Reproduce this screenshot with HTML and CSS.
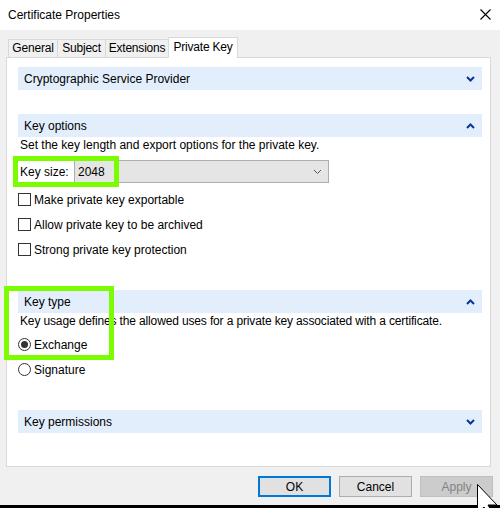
FILE: index.html
```html
<!DOCTYPE html>
<html lang="en">
<head>
  <meta charset="UTF-8">
  <title>Certificate Properties</title>
  <link rel="stylesheet" href="styles.css">
</head>
<body>
  <div class="window">
    <div class="titlebar">
      <span class="title">Certificate Properties</span>
      <svg class="close" width="11" height="11" viewBox="0 0 11 11">
        <path d="M0.5 0.5 L10.5 10.5 M10.5 0.5 L0.5 10.5" stroke="#000" stroke-width="1.1" fill="none"/>
      </svg>
    </div>

    <div class="body">
      <div class="tabs">
        <div class="tab tab-general">General</div>
        <div class="tab tab-subject">Subject</div>
        <div class="tab tab-ext">Extensions</div>
        <div class="tab tab-key active">Private Key</div>
      </div>

      <div class="panel">
        <!-- Cryptographic Service Provider -->
        <div class="section-head">
          <span>Cryptographic Service Provider</span>
          <svg class="chev" width="9" height="6" viewBox="0 0 9 6"><polyline points="1,1 4.5,4.5 8,1" /></svg>
        </div>

        <!-- Key options -->
        <div class="section-head gap">
          <span>Key options</span>
          <svg class="chev" width="9" height="6" viewBox="0 0 9 6"><polyline points="1,5 4.5,1.5 8,5" /></svg>
        </div>
        <div class="desc">Set the key length and export options for the private key.</div>
        <div class="keysize">
          <span class="keysize-label">Key size:</span>
          <div class="combo">
            <span>2048</span>
            <svg width="9" height="6" viewBox="0 0 9 6"><polyline points="1,1 4.5,4.5 8,1" fill="none" stroke="#555" stroke-width="1"/></svg>
          </div>
        </div>
        <div class="checks">
          <label class="check"><span class="box"></span>Make private key exportable</label>
          <label class="check"><span class="box"></span>Allow private key to be archived</label>
          <label class="check"><span class="box"></span>Strong private key protection</label>
        </div>

        <!-- Key type -->
        <div class="section-head gap-lg">
          <span>Key type</span>
          <svg class="chev" width="9" height="6" viewBox="0 0 9 6"><polyline points="1,5 4.5,1.5 8,5" /></svg>
        </div>
        <div class="desc tight">Key usage defines the allowed uses for a private key associated with a certificate.</div>
        <div class="radios">
          <label class="radio"><span class="dot checked"></span>Exchange</label>
          <label class="radio"><span class="dot"></span>Signature</label>
        </div>

        <!-- Key permissions -->
        <div class="section-head gap-lg">
          <span>Key permissions</span>
          <svg class="chev" width="9" height="6" viewBox="0 0 9 6"><polyline points="1,1 4.5,4.5 8,1" /></svg>
        </div>
      </div>

      <div class="buttons">
        <button class="btn default">OK</button>
        <button class="btn">Cancel</button>
        <button class="btn disabled">Apply</button>
      </div>
    </div>
    <div class="shadow-strip"></div>
  </div>

  <!-- annotation boxes drawn over the dialog -->
  <div class="mark mark-size"></div>
  <div class="mark mark-type"></div>

  <svg class="cursor" width="26" height="30" viewBox="0 0 26 30">
    <path d="M0.5 0.5 L0.5 29 L7 23 L11 30 L15 28 L11 21 L20 21 Z" fill="#fff" stroke="#000" stroke-width="1"/>
  </svg>
</body>
</html>
```

FILE: styles.css
```css
body {
  margin: 0;
  font-family: "Segoe UI", "Liberation Sans", Arial, sans-serif;
  font-size: 12px;
  color: #000;
  background-color: #f0f0f0;
  overflow: hidden;
}

.window {
  width: 500px;
  height: 508px;
  display: flex;
  flex-direction: column;
}

.titlebar {
  height: 30px;
  background-color: #ffffff;
  display: flex;
  align-items: center;
  justify-content: space-between;
  padding: 0 9px 0 8px;
  box-sizing: border-box;
}

.title {
  font-size: 12px;
  margin-top: -1px;
}

.close {
  margin-top: -1px;
}

.body {
  flex: 1;
  padding-top: 7px;
}

/* tab strip */
.tabs {
  display: flex;
  align-items: flex-end;
  padding-left: 8px;
  height: 20px;
  position: relative;
  z-index: 1;
}

.tab {
  height: 18px;
  line-height: 17px;
  box-sizing: border-box;
  text-align: center;
  white-space: nowrap;
  border: 1px solid #d9d9d9;
  border-bottom: none;
  margin-right: -1px;
  background-color: #f0f0f0;
  letter-spacing: -0.2px;
}

.tab-general { width: 50px; }
.tab-subject { width: 49px; }
.tab-ext { width: 64px; }
.tab-key { width: 70px; }

.tab.active {
  height: 21px;
  line-height: 18px;
  background-color: #ffffff;
  margin-bottom: -1px;
}

/* page panel */
.panel {
  margin: 0 9px 0 6px;
  height: 410px;
  box-sizing: border-box;
  border: 1px solid #d9d9d9;
  background-color: #ffffff;
  padding: 9px 8px 0 11px;
}

.section-head {
  height: 23px;
  background-color: #e3eefc;
  display: flex;
  align-items: center;
  justify-content: space-between;
  padding: 0 7px 0 6px;
}

.section-head.gap {
  margin-top: 24px;
}

.section-head.gap-lg {
  margin-top: 28px;
}

.chev polyline {
  fill: none;
  stroke: #0b3597;
  stroke-width: 2;
}

.desc {
  height: 16px;
  line-height: 16px;
  padding-left: 2px;
  white-space: nowrap;
}

.desc.tight {
  letter-spacing: -0.14px;
}

.keysize {
  display: flex;
  align-items: center;
  margin-top: 7px;
  padding-left: 2px;
}

.keysize-label {
  width: 54px;
}

.combo {
  width: 255px;
  height: 23px;
  box-sizing: border-box;
  border: 1px solid #adadad;
  background-color: #e5e5e5;
  display: flex;
  align-items: center;
  justify-content: space-between;
  padding: 0 6px 0 3px;
}

.checks {
  margin-top: 4px;
}

.check,
.radio {
  height: 25px;
  display: flex;
  align-items: center;
}

.box {
  width: 13px;
  height: 13px;
  box-sizing: border-box;
  border: 1px solid #333;
  background-color: #fff;
  margin-right: 3px;
}

.radios {
  margin-top: 3px;
}

.dot {
  width: 13px;
  height: 13px;
  box-sizing: border-box;
  border: 1px solid #333;
  border-radius: 50%;
  background-color: #fff;
  margin-right: 3px;
  display: flex;
  align-items: center;
  justify-content: center;
}

.dot.checked::after {
  content: "";
  width: 7px;
  height: 7px;
  border-radius: 50%;
  background-color: #333;
}

/* dialog buttons */
.buttons {
  display: flex;
  justify-content: flex-end;
  gap: 8px;
  padding: 9px 7px 0 0;
}

.btn {
  width: 73px;
  height: 21px;
  box-sizing: border-box;
  border: 1px solid #adadad;
  background-color: #e1e1e1;
  font-family: inherit;
  font-size: 12px;
  color: #000;
  padding: 0;
}

.btn.default {
  border: 2px solid #0078d7;
}

.btn.disabled {
  background-color: #cccccc;
  border-color: #bfbfbf;
  color: #838383;
}

.shadow-strip {
  height: 3px;
  background-color: #000;
}

/* annotation marks */
.mark {
  position: absolute;
  border: 5px solid #7cfc00;
  box-sizing: border-box;
}

.mark-size {
  left: 13px;
  top: 156px;
  width: 106px;
  height: 31px;
}

.mark-type {
  left: 4px;
  top: 286px;
  width: 110px;
  height: 74px;
}

.cursor {
  position: absolute;
  left: 477px;
  top: 484px;
}
```
